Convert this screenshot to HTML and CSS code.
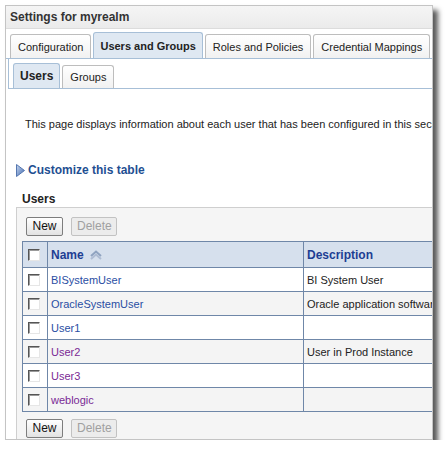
FILE: index.html
```html
<!DOCTYPE html>
<html>
<head>
<meta charset="utf-8">
<link rel="stylesheet" href="styles.css">
</head>
<body>
<div class="window">
  <div class="titlebar">Settings for myrealm</div>
  <div class="tabbar">
    <div class="tab">Configuration</div>
    <div class="tab selected">Users and Groups</div>
    <div class="tab">Roles and Policies</div>
    <div class="tab">Credential Mappings</div>
    <div class="tab">Providers</div>
  </div>
  <div class="subtabbar">
    <div class="subtab selected">Users</div>
    <div class="subtab">Groups</div>
  </div>
  <div class="content">
    <p class="intro">This page displays information about each user that has been configured in this security realm.</p>
    <div class="customize">
      <svg class="tri" width="9" height="13" viewBox="0 0 9 13">
        <defs>
          <linearGradient id="tg" x1="0" y1="0" x2="1" y2="1">
            <stop offset="0" stop-color="#c9d8ee"/>
            <stop offset="1" stop-color="#3d67b0"/>
          </linearGradient>
        </defs>
        <polygon points="0.5,0.5 8.5,6.5 0.5,12.5" fill="url(#tg)" stroke="#5577b0" stroke-width="1"/>
      </svg>
      <span>Customize this table</span>
    </div>
    <div class="section-title">Users</div>
    <div class="tablebox">
      <div class="toolbar">
        <button class="btn">New</button>
        <button class="btn disabled">Delete</button>
      </div>
      <table class="grid">
        <colgroup>
          <col class="c-check">
          <col class="c-name">
          <col class="c-desc">
        </colgroup>
        <thead>
          <tr>
            <th><span class="cb"></span></th>
            <th class="name-h">Name
              <svg class="sort" width="14" height="10" viewBox="0 0 14 10">
                <polyline points="2,6 7,1.5 12,6" fill="none" stroke="#8fa3c0" stroke-width="2"/>
                <polyline points="2,9 7,4.5 12,9" fill="none" stroke="#aebcd3" stroke-width="2"/>
              </svg>
            </th>
            <th>Description</th>
          </tr>
        </thead>
        <tbody>
          <tr><td><span class="cb"></span></td><td><a class="lnk">BISystemUser</a></td><td>BI System User</td></tr>
          <tr class="alt"><td><span class="cb"></span></td><td><a class="lnk">OracleSystemUser</a></td><td>Oracle application software system user.</td></tr>
          <tr><td><span class="cb"></span></td><td><a class="lnk">User1</a></td><td></td></tr>
          <tr class="alt"><td><span class="cb"></span></td><td><a class="lnk visited">User2</a></td><td>User in Prod Instance</td></tr>
          <tr><td><span class="cb"></span></td><td><a class="lnk visited">User3</a></td><td></td></tr>
          <tr class="alt"><td><span class="cb"></span></td><td><a class="lnk visited">weblogic</a></td><td></td></tr>
        </tbody>
      </table>
      <div class="toolbar bottom">
        <button class="btn">New</button>
        <button class="btn disabled">Delete</button>
      </div>
    </div>
  </div>
</div>
</body>
</html>
```
FILE: styles.css
```css
html, body {
  margin: 0;
  padding: 0;
  background: #ffffff;
}
body {
  font-family: "Liberation Sans", Arial, sans-serif;
  font-size: 11px;
  color: #222;
}
.window {
  margin: 5px 0 0 5px;
  width: 426px;
  height: 433px;
  border: 1px solid #c4c4c4;
  background: #ffffff;
  overflow: hidden;
  box-shadow: 5px 5px 5px rgba(0, 0, 0, 0.65);
}
.titlebar {
  height: 22px;
  line-height: 22px;
  padding-left: 4px;
  background: linear-gradient(#f5f5f5, #ebebeb);
  border-bottom: 1px solid #dcdcdc;
  font-weight: bold;
  font-size: 12px;
  color: #333;
  white-space: nowrap;
}
.tabbar {
  display: flex;
  align-items: flex-end;
  gap: 2px;
  margin-top: 3px;
  padding-left: 4px;
  border-bottom: 1px solid #a7bfd7;
  white-space: nowrap;
}
.tab {
  flex: none;
  height: 24px;
  line-height: 24px;
  padding: 0 7px;
  border: 1px solid #bdbdbd;
  border-bottom: none;
  border-radius: 3px 3px 0 0;
  background: linear-gradient(#ffffff, #f1f1f1);
  color: #222;
  box-sizing: border-box;
  font-size: 11px;
}
.tab.selected {
  height: 26px;
  line-height: 26px;
  padding: 0 6px;
  font-weight: bold;
  border-color: #a7bfd7;
  background: #dfe8f2;
}
.subtabbar {
  display: flex;
  align-items: flex-end;
  gap: 2px;
  margin-left: 2px;
  height: 29px;
  padding-left: 4px;
  border-left: 1px solid #a7bfd7;
  border-bottom: 1px solid #a7bfd7;
}
.subtab {
  flex: none;
  height: 23px;
  line-height: 23px;
  padding: 0 7px;
  border: 1px solid #bdbdbd;
  border-bottom: none;
  border-radius: 3px 3px 0 0;
  background: linear-gradient(#ffffff, #f1f1f1);
  box-sizing: border-box;
}
.subtab.selected {
  height: 25px;
  line-height: 25px;
  font-weight: bold;
  font-size: 12px;
  border-color: #a7bfd7;
  background: #dfe8f2;
  padding: 0 6px;
}
.content {
  padding-left: 10px;
}
.intro {
  margin: 29px 0 0 9px;
  white-space: nowrap;
  line-height: 13px;
}
.customize {
  display: flex;
  align-items: center;
  gap: 3px;
  margin-top: 32px;
  height: 14px;
  font-weight: bold;
  font-size: 12px;
  color: #1f4f92;
}
.tri {
  display: block;
}
.section-title {
  margin: 15px 0 0 6px;
  font-weight: bold;
  font-size: 12px;
  line-height: 14px;
  color: #222;
}
.tablebox {
  margin-top: 1px;
  width: 460px;
  height: 240px;
  border: 1px solid #cfcfcf;
  border-right: none;
  background: #f5f5f5;
  padding: 9px 0 0 5px;
  box-sizing: border-box;
}
.toolbar {
  display: flex;
  gap: 8px;
  padding-left: 4px;
}
.toolbar.bottom {
  margin-top: 7px;
}
.btn {
  font-family: "Liberation Sans", Arial, sans-serif;
  font-size: 12px;
  height: 19px;
  padding: 0 5px;
  border: 1px solid #7d7d7d;
  border-radius: 2px;
  background: linear-gradient(#ffffff, #e2e2e2);
  color: #111;
  line-height: 17px;
}
.toolbar .btn:first-child {
  width: 37px;
}
.btn.disabled {
  width: 46px;
  border-color: #c2c2c2;
  background: #ececec;
  color: #a0a0a0;
}
.grid {
  margin-top: 5px;
  border-collapse: collapse;
  table-layout: fixed;
  width: 460px;
  border: 1px solid #6f87a8;
}
.c-check { width: 25px; }
.c-name { width: 256px; }
.c-desc { width: 179px; }
.grid th, .grid td {
  border: 1px solid #6f87a8;
  text-align: left;
  white-space: nowrap;
  overflow: hidden;
  padding: 0 0 0 3px;
}
.grid th {
  height: 25px;
  background: #d6e0ed;
  color: #1d3e93;
  font-weight: bold;
  font-size: 12px;
}
.grid td {
  height: 23px;
  background: #ffffff;
  color: #222;
}
.grid tr.alt td {
  background: #f4f4f4;
}
.grid th:first-child, .grid td:first-child {
  padding: 0 0 0 5px;
}
.sort {
  vertical-align: -1px;
  margin-left: 2px;
}
.cb {
  display: block;
  width: 12px;
  height: 12px;
  box-sizing: border-box;
  border: 1px solid;
  border-color: #555 #e6e6e6 #e6e6e6 #555;
  background: #fff;
  box-shadow: inset 1px 1px 0 #9a9a9a;
}
.lnk {
  color: #2a4ea3;
  text-decoration: none;
}
.lnk.visited {
  color: #7a2a94;
}
```
